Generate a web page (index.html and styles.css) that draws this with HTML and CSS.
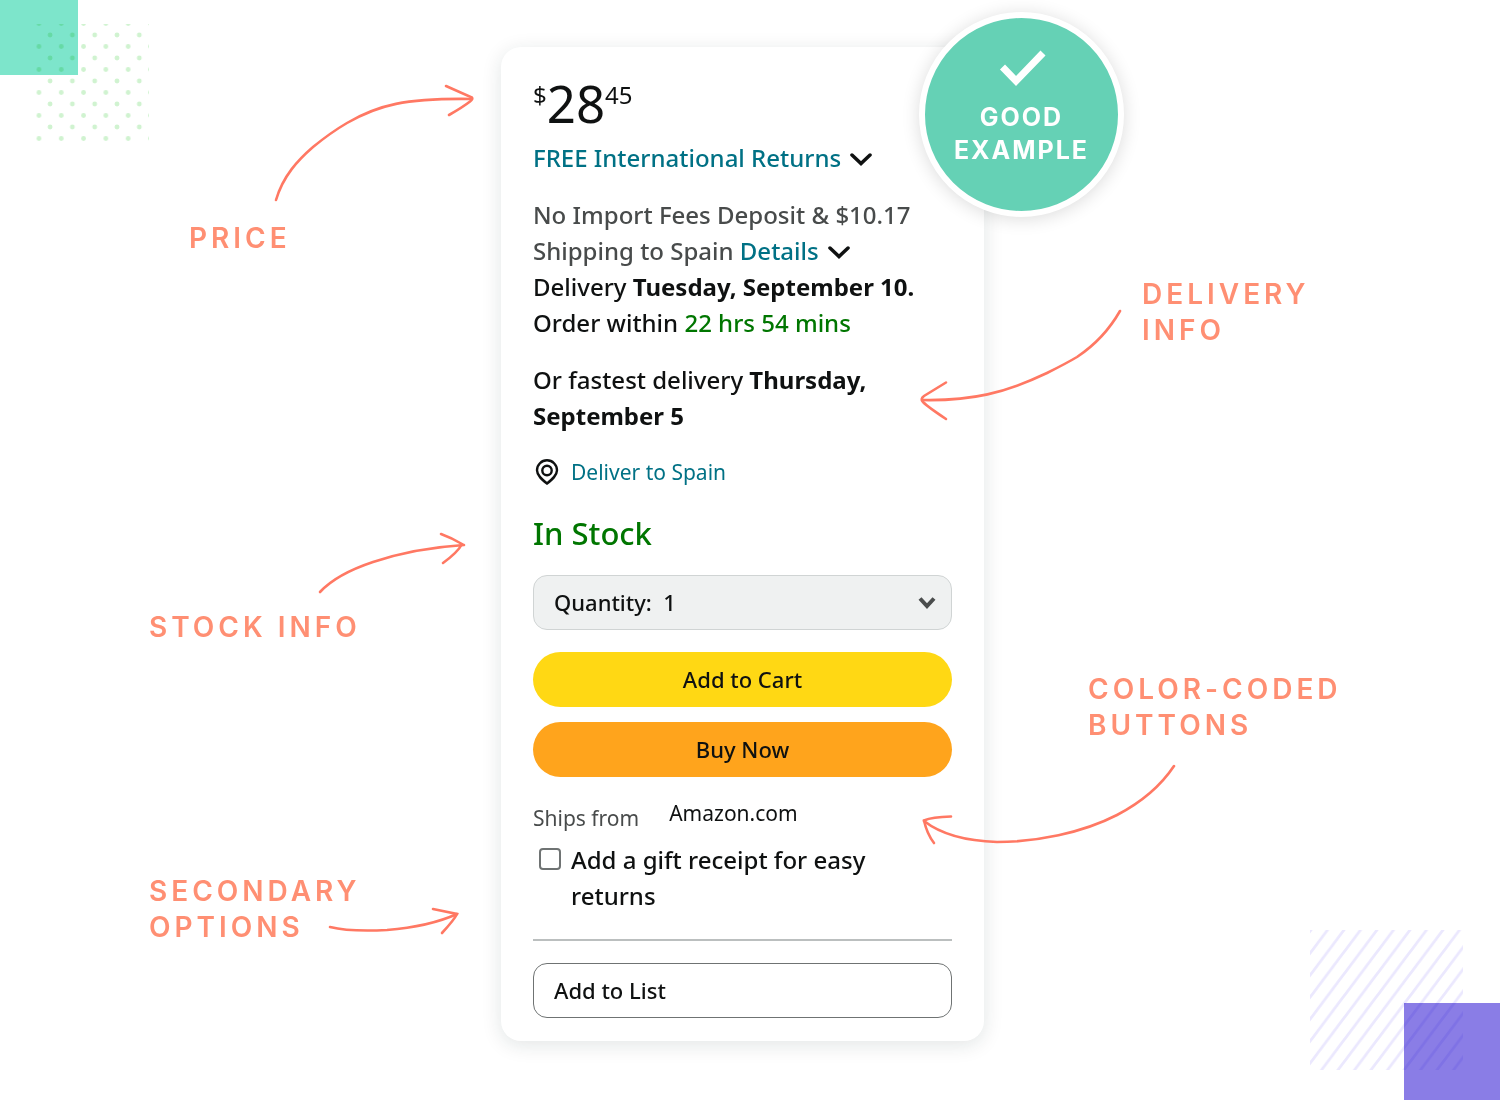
FILE: index.html
```html
<!doctype html>
<html lang="en">
<head>
  <meta charset="utf-8">
  <title>Buy box - good example</title>
  <link rel="stylesheet" href="styles.css">
</head>
<body>
  <div class="board">
    <div class="square-teal"></div>
    <svg class="dots" viewBox="36 24 113 119" aria-hidden="true">
      <defs>
        <pattern id="dot-grid" x="27.8" y="12" width="22.3" height="23" patternUnits="userSpaceOnUse">
          <g fill="#d0f3d0">
            <circle cx="11.15" cy="11.5" r="2.4"/>
            <circle cx="0" cy="0" r="2.4"/>
            <circle cx="22.3" cy="0" r="2.4"/>
            <circle cx="0" cy="23" r="2.4"/>
            <circle cx="22.3" cy="23" r="2.4"/>
          </g>
        </pattern>
      </defs>
      <rect x="36" y="24" width="113" height="119" fill="url(#dot-grid)"/>
    </svg>
    <div class="square-purple"></div>
    <svg class="stripes" viewBox="1310 930 153 140" aria-hidden="true">
      <defs>
        <pattern id="stripe" x="1311" y="930" width="16.5" height="22" patternUnits="userSpaceOnUse">
          <path d="M-16.5 22L16.5 -22M-16.5 44L33 -22M0 44L33 0" stroke="#ebe8fe" stroke-width="2.8"/>
        </pattern>
      </defs>
      <rect x="1310" y="930" width="153" height="140" fill="url(#stripe)"/>
    </svg>

    <div class="notes notes-left">
      <div class="note note-price">
        PRICE
        <svg class="arrow" viewBox="270 80 210 125" width="210" height="125" aria-hidden="true">
          <path d="M276 200C283 176 298 160 313 147C324 138 335 130 347 123C378 105 405 98 472 99"/>
          <path d="M446 86L472 97.5Q473 99 470 101.5Q463 107 449 115"/>
        </svg>
      </div>
      <div class="note note-stock">
        STOCK INFO
        <svg class="arrow" viewBox="315 525 155 75" width="155" height="75" aria-hidden="true">
          <path d="M320 592C333 578 352 569 373 562C400 553 432 547 464 545"/>
          <path d="M441 534Q452 538 462 544Q458 552 443 563"/>
        </svg>
      </div>
      <div class="note note-options">
        SECONDARY<br>OPTIONS
        <svg class="arrow" viewBox="325 900 140 40" width="140" height="40" aria-hidden="true">
          <path d="M330 927C346 931 368 931 387 930C412 928 437 923 457 914"/>
          <path d="M433 909L457 914Q454 920 442 933"/>
        </svg>
      </div>
    </div>

    <main class="card">
      <div class="badge">
        <svg width="48" height="38" viewBox="0 0 48 38" aria-hidden="true">
          <path d="M4.500 18L18 32L45 4" fill="none" stroke="#fff" stroke-width="7"/>
        </svg>
        <span>GOOD<br>EXAMPLE</span>
      </div>

      <div class="price"><sup>$</sup><span>28</span><sup>45</sup></div>
      <div class="returns">
        <a href="#">FREE International Returns</a>
        <svg class="chevron" viewBox="0 0 24 14" aria-hidden="true"><path d="M3 2L12 10.500L21 2"/></svg>
      </div>

      <p>
        <span class="muted">No Import Fees Deposit &amp; $10.17<br>
        Shipping to Spain</span> <a href="#">Details</a>
        <svg class="chevron" viewBox="0 0 24 14" aria-hidden="true"><path d="M3 2L12 10.500L21 2"/></svg><br>
        Delivery <b>Tuesday, September 10.</b><br>
        Order within <span class="green">22 hrs 54 mins</span>
      </p>
      <p>Or fastest delivery <b>Thursday,<br>September 5</b></p>

      <div class="location">
        <svg width="24" height="26" viewBox="0 0 24 26" aria-hidden="true">
          <path d="M12 24.500C7 20.500 2 16.500 2 11.300A10 10 0 0 1 22 11.300C22 16.500 17 20.500 12 24.500Z"/>
          <circle cx="12" cy="11.500" r="4.700"/>
        </svg>
        <a href="#">Deliver to Spain</a>
      </div>

      <div class="stock">In Stock</div>

      <div class="quantity">
        <select aria-label="Quantity">
          <option>Quantity: &nbsp;1</option>
          <option>Quantity: &nbsp;2</option>
          <option>Quantity: &nbsp;3</option>
        </select>
        <svg viewBox="0 0 18 13" width="18" height="13" aria-hidden="true"><path d="M2 2.500L9 10L16 2.500"/></svg>
      </div>
      <button class="btn btn-cart" type="button">Add to Cart</button>
      <button class="btn btn-buy" type="button">Buy Now</button>

      <dl class="ships">
        <dt>Ships from</dt>
        <dd>Amazon.com</dd>
      </dl>
      <div class="gift">
        <input type="checkbox" id="gift">
        <label for="gift">Add a gift receipt for easy returns</label>
      </div>

      <hr>
      <button class="btn-list" type="button">Add to List</button>
    </main>

    <div class="notes notes-right">
      <div class="note note-delivery">
        DELIVERY<br>INFO
        <svg class="arrow" viewBox="915 305 210 120" width="210" height="120" aria-hidden="true">
          <path d="M1120 311C1108 332 1095 345 1077 357C1067 363 1057 368 1047 373C1005 393 972 401 922 400"/>
          <path d="M946 382.500L924 396Q920 399 923 402Q928 407 946 419"/>
        </svg>
      </div>
      <div class="note note-buttons">
        COLOR-CODED<br>BUTTONS
        <svg class="arrow" viewBox="915 760 265 90" width="265" height="90" aria-hidden="true">
          <path d="M1174 766C1158 790 1138 804 1117 815C1082 833 1036 842 997 842C966 841 942 835 924 821"/>
          <path d="M951 816.500Q932 817 924 820.500Q927 834 934 843"/>
        </svg>
      </div>
    </div>
  </div>
</body>
</html>
```
FILE: styles.css
```css
* {
  box-sizing: border-box;
}

body {
  margin: 0;
  color: #0f1111;
  background-color: #fff;
  font-family: "Noto Sans", sans-serif;
  font-size: 24px;
  font-weight: 500;
  line-height: 36px;
}

a {
  color: #007185;
  text-decoration: none;
}

p {
  margin: 21px 0 0;
}

.board {
  position: relative;
  display: grid;
  grid-template-columns: 501fr 483px 516fr;
  align-items: start;
  min-height: 100vh;
  padding: 47px 0 59px;
  overflow: hidden;
}

/* corner decoration */
.square-teal,
.square-purple,
.dots,
.stripes {
  position: absolute;
}

.square-teal {
  top: 0;
  left: 0;
  width: 78px;
  height: 75px;
  background: #7de5cb;
}

.dots {
  top: 24px;
  left: 36px;
  width: 113px;
  height: 119px;
  mix-blend-mode: multiply;
}

.square-purple {
  right: 0;
  bottom: 0;
  width: 96px;
  height: 97px;
  background: #8a7de6;
}

.stripes {
  right: 37px;
  bottom: 30px;
  width: 153px;
  height: 140px;
  mix-blend-mode: multiply;
}

/* notes on both sides of the card */
.notes {
  position: relative;
  z-index: 1;
  display: flex;
  flex-direction: column;
  color: #ff8f73;
  font-family: Inter, sans-serif;
  font-size: 28px;
  font-weight: 600;
  letter-spacing: 4px;
}

.notes-left {
  width: 352px;
  justify-self: end;
  padding-top: 173px;
}

.notes-right {
  padding-top: 229px;
}

.note {
  position: relative;
}

.note-price {
  margin-left: 40px;
}

.note-stock {
  margin-top: 353px;
}

.note-options {
  margin-top: 228px;
}

.note-delivery {
  margin-left: 158px;
}

.note-buttons {
  margin-top: 323px;
  margin-left: 104px;
}

.arrow {
  position: absolute;
  fill: none;
  stroke: #ff7863;
  stroke-width: 2.6;
  stroke-linecap: round;
}

.note-price .arrow {
  top: -140px;
  left: 81px;
}

.note-stock .arrow {
  top: -84px;
  left: 166px;
}

.note-options .arrow {
  top: 27px;
  left: 176px;
}

.note-delivery .arrow {
  top: 29px;
  left: -227px;
}

.note-buttons .arrow {
  top: 89px;
  left: -173px;
}

/* card */
.card {
  position: relative;
  padding: 32px 32px 23px;
  border-radius: 20px;
  background: #fff;
  box-shadow: 0 4px 20px rgba(20, 40, 40, 0.12);
}

.badge {
  position: absolute;
  top: -35px;
  right: -140px;
  display: flex;
  flex-direction: column;
  align-items: center;
  gap: 14px;
  width: 205px;
  height: 205px;
  padding-top: 31px;
  border: 6px solid #fff;
  border-radius: 50%;
  color: #fff;
  background: #65d1b5;
  box-shadow: 0 2px 18px rgba(0, 0, 0, 0.14);
  font-family: Inter, sans-serif;
  font-size: 25px;
  font-weight: 700;
  line-height: 33px;
  letter-spacing: 2px;
  text-align: center;
}

.price {
  display: flex;
  height: 61px;
  font-size: 51px;
  font-weight: 400;
  line-height: 48px;
}

.price sup {
  font-size: 24px;
  line-height: 32px;
}

.muted {
  color: #484b4b;
}

.green {
  color: #007600;
}

.chevron {
  width: 24px;
  height: 14px;
  margin-left: 2px;
  fill: none;
  stroke: #0f1111;
  stroke-width: 3.5;
  stroke-linecap: round;
}

.location {
  display: flex;
  align-items: center;
  gap: 12px;
  margin-top: 20px;
  padding-left: 2px;
  font-size: 21px;
  font-weight: 400;
}

.location svg {
  fill: none;
  stroke: #0f1111;
  stroke-width: 2.4;
}

.stock {
  margin: 21px 0 20px;
  color: #007600;
  font-size: 31px;
  line-height: 44px;
}

.quantity {
  position: relative;
}

.quantity select,
.btn,
.btn-list {
  display: block;
  width: 100%;
  height: 55px;
  color: #0f1111;
  font: inherit;
  font-size: 22px;
}

.quantity select {
  appearance: none;
  padding: 0 20px 2px;
  border: 1px solid #d0d4d4;
  border-radius: 14px;
  background: #eff1f1;
}

.quantity svg {
  position: absolute;
  top: 21px;
  right: 16px;
  fill: none;
  stroke: #4a4d4d;
  stroke-width: 4;
  pointer-events: none;
}

.btn {
  padding: 0 20px 2px;
  border: 0;
  border-radius: 28px;
}

.btn-cart {
  margin-top: 22px;
  background: #ffd814;
}

.btn-buy {
  margin-top: 15px;
  background: #ffa41c;
}

.ships {
  display: flex;
  gap: 30px;
  height: 33px;
  margin: 22px 0 10px;
  font-size: 21px;
  font-weight: 400;
  line-height: 28px;
}

.ships dt {
  align-self: flex-end;
  color: #484b4b;
}

.ships dd {
  margin: 0;
}

.gift {
  display: flex;
  align-items: flex-start;
  gap: 10px;
  padding-left: 6px;
}

.gift input {
  appearance: none;
  flex: none;
  width: 22px;
  height: 22px;
  margin: 6px 0 0;
  border: 2px solid #6f7373;
  border-radius: 4px;
  background: #fff;
}

.gift input:checked {
  background: #007185;
}

.gift label {
  max-width: 320px;
}

hr {
  height: 2px;
  margin: 25px 0 22px;
  border: 0;
  background: #bbbfbf;
}

.btn-list {
  padding: 0 20px 2px;
  border: 1px solid #6f7373;
  border-radius: 14px;
  background: #fff;
  text-align: left;
}
```
